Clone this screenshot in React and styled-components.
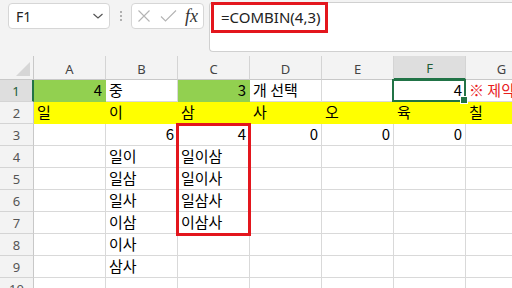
import React from 'react';
import styled, { createGlobalStyle, css } from 'styled-components';

const GlobalStyle = createGlobalStyle`
  html, body { margin: 0; padding: 0; overflow: hidden; background: #f3f3f3; }
  * { box-sizing: border-box; }
`;

const Page = styled.div`
  width: 512px;
  height: 288px;
  overflow: hidden;
  background: #f3f3f3;
  font-family: "Noto Sans", "Noto Sans CJK KR", sans-serif;
`;

const Toolbar = styled.div`
  height: 56px;
  display: flex;
  align-items: flex-start;
  padding: 2px 0 0 8px;
`;

const NameBox = styled.div`
  width: 102px;
  height: 26px;
  margin-top: 1px;
  background: #fff;
  border: 1px solid #d6d6d6;
  border-radius: 4px;
  display: flex;
  align-items: center;
  justify-content: space-between;
  padding: 0 5px 0 7px;
  font-size: 14px;
  color: #222;
`;

const Dots = styled.div`
  width: 21px;
  height: 28px;
  display: flex;
  flex-direction: column;
  align-items: center;
  justify-content: center;
  gap: 2px;
  span { width: 2px; height: 2px; background: #9a9a9a; border-radius: 1px; }
`;

const FxBox = styled.div`
  width: 73px;
  height: 26px;
  margin-top: 1px;
  background: #fff;
  border: 1px solid #d6d6d6;
  border-radius: 4px;
  display: flex;
  align-items: center;
  padding: 0 0 0 5px;
  gap: 9px;
`;

const Fx = styled.span`
  font-family: "Liberation Serif", "DejaVu Serif", serif;
  font-style: italic;
  font-size: 18px;
  color: #333;
  letter-spacing: 0px;
  margin-left: -1px;
  line-height: 1;
`;

const FormulaBox = styled.div`
  flex: 1;
  height: 50px;
  margin-left: 5px;
  background: #fff;
  border: 1px solid #d0d0d0;
  border-right: none;
  border-radius: 4px 0 0 4px;
  padding: 0 0 0 1px;
`;

const FormulaText = styled.span`
  display: inline-flex;
  align-items: center;
  width: 117px;
  height: 31px;
  margin-top: -1px;
  border: 3px solid #e3161d;
  padding: 0 0 1px 7px;
  font-size: 15px;
  color: #222;
  white-space: nowrap;
`;

const Sheet = styled.div`
  display: grid;
  grid-template-columns: 34px repeat(7, 72px);
  grid-template-rows: 24px repeat(10, 22px);
  background: #fff;
`;

const Corner = styled.div`
  background: #f3f3f3;
  border-right: 1px solid #c8c8c8;
  border-bottom: 1px solid #c8c8c8;
  position: relative;
  display: flex;
  align-items: flex-end;
  justify-content: flex-end;
  padding: 0 3px 3px 0;
`;

const ColHead = styled.div`
  background: ${p => (p.$active ? '#dedede' : '#f3f3f3')};
  border-right: 1px solid #d4d4d4;
  border-bottom: ${p => (p.$active ? '2px solid #217346' : '1px solid #c8c8c8')};
  display: flex;
  align-items: center;
  justify-content: center;
  font-size: 13px;
  color: ${p => (p.$active ? '#1f5c36' : '#444')};
  padding-top: 2px;
`;

const RowHead = styled.div`
  background: ${p => (p.$active ? '#dedede' : '#f3f3f3')};
  border-bottom: 1px solid #d4d4d4;
  border-right: ${p => (p.$active ? '2px solid #217346' : '1px solid #c8c8c8')};
  display: flex;
  align-items: center;
  justify-content: center;
  font-size: 13px;
  color: ${p => (p.$active ? '#1f5c36' : '#555')};
`;

const fills = { green: '#92d050', yellow: '#ffff00' };

const Cell = styled.div`
  position: relative;
  background: ${p => (p.$fill ? fills[p.$fill] : '#fff')};
  border-right: 1px solid ${p => (p.$fill ? fills[p.$fill] : '#d9d9d9')};
  border-bottom: 1px solid ${p => (p.$fill ? fills[p.$fill] : '#d9d9d9')};
  font-family: "Noto Sans CJK KR", "Noto Sans", sans-serif;
  font-size: 15px;
  line-height: 22px;
  color: ${p => p.$color || '#000'};
  text-align: ${p => (p.$right ? 'right' : 'left')};
  padding: 0 ${p => (p.$right ? '3px' : '0')} 0 ${p => (p.$right ? '0' : '3px')};
  white-space: nowrap;
  overflow: visible;
  span { position: relative; top: -1px; }
`;

const ActiveFrame = styled.div`
  position: absolute;
  left: -2px;
  top: -1px;
  right: -1px;
  bottom: -1px;
  border: 2px solid #217346;
  z-index: 3;
  pointer-events: none;
`;

const FillHandle = styled.div`
  position: absolute;
  right: -4px;
  bottom: -4px;
  width: 6px;
  height: 6px;
  background: #217346;
  border: 1px solid #fff;
  box-sizing: content-box;
`;

const RedFrame = styled.div`
  position: absolute;
  left: -2px;
  top: -1px;
  width: 75px;
  height: 113px;
  border: 3px solid #e3161d;
  z-index: 4;
  pointer-events: none;
`;

const cols = ['A', 'B', 'C', 'D', 'E', 'F', 'G'];

const R = v => ({ v, r: true });
const L = v => ({ v });
const E = {};

const rows = [
  [
    { v: '4', r: true, fill: 'green' },
    L('중'),
    { v: '3', r: true, fill: 'green' },
    L('개 선택'),
    E,
    { v: '4', r: true, active: true },
    { v: '※ 제약 조건', color: '#e8201e' },
  ],
  ['일', '이', '삼', '사', '오', '육', '칠'].map(v => ({ v, fill: 'yellow' })),
  [E, R('6'), { v: '4', r: true, red: true }, R('0'), R('0'), R('0'), E],
  [E, L('일이'), L('일이삼'), E, E, E, E],
  [E, L('일삼'), L('일이사'), E, E, E, E],
  [E, L('일사'), L('일삼사'), E, E, E, E],
  [E, L('이삼'), L('이삼사'), E, E, E, E],
  [E, L('이사'), E, E, E, E, E],
  [E, L('삼사'), E, E, E, E, E],
  [E, E, E, E, E, E, E],
];

const Chevron = () => (
  <svg width="12" height="8" viewBox="0 0 12 8">
    <path d="M1.5 2 L6 6 L10.5 2" fill="none" stroke="#555" strokeWidth="1.2" />
  </svg>
);

const CrossIcon = () => (
  <svg width="14" height="14" viewBox="0 0 14 14">
    <path d="M1.5 1.5 L12.5 12.5 M12.5 1.5 L1.5 12.5" stroke="#b4b4b4" strokeWidth="1.1" />
  </svg>
);

const CheckIcon = () => (
  <svg width="17" height="14" viewBox="0 0 17 14">
    <path d="M1 7.5 L5.5 12 L16 1.5" fill="none" stroke="#b4b4b4" strokeWidth="1.1" />
  </svg>
);

const CornerTriangle = () => (
  <svg width="14" height="14" viewBox="0 0 14 14">
    <path d="M14 0 L14 14 L0 14 Z" fill="#d6d6d6" />
  </svg>
);

export default function App() {
  return (
    <Page>
      <GlobalStyle />
      <Toolbar>
        <NameBox>
          <span>F1</span>
          <Chevron />
        </NameBox>
        <Dots>
          <span />
          <span />
          <span />
        </Dots>
        <FxBox>
          <CrossIcon />
          <CheckIcon />
          <Fx>fx</Fx>
        </FxBox>
        <FormulaBox>
          <FormulaText>=COMBIN(4,3)</FormulaText>
        </FormulaBox>
      </Toolbar>
      <Sheet>
        <Corner>
          <CornerTriangle />
        </Corner>
        {cols.map(c => (
          <ColHead key={c} $active={c === 'F'}>
            {c}
          </ColHead>
        ))}
        {rows.map((row, i) => (
          <React.Fragment key={i}>
            <RowHead $active={i === 0}>{i + 1}</RowHead>
            {row.map((cell, j) => (
              <Cell
                key={j}
                $fill={cell.fill}
                $right={cell.r}
                $color={cell.color}
              >
                {cell.v && <span>{cell.v}</span>}
                {cell.active && (
                  <ActiveFrame>
                    <FillHandle />
                  </ActiveFrame>
                )}
                {cell.red && <RedFrame />}
              </Cell>
            ))}
          </React.Fragment>
        ))}
      </Sheet>
    </Page>
  );
}
